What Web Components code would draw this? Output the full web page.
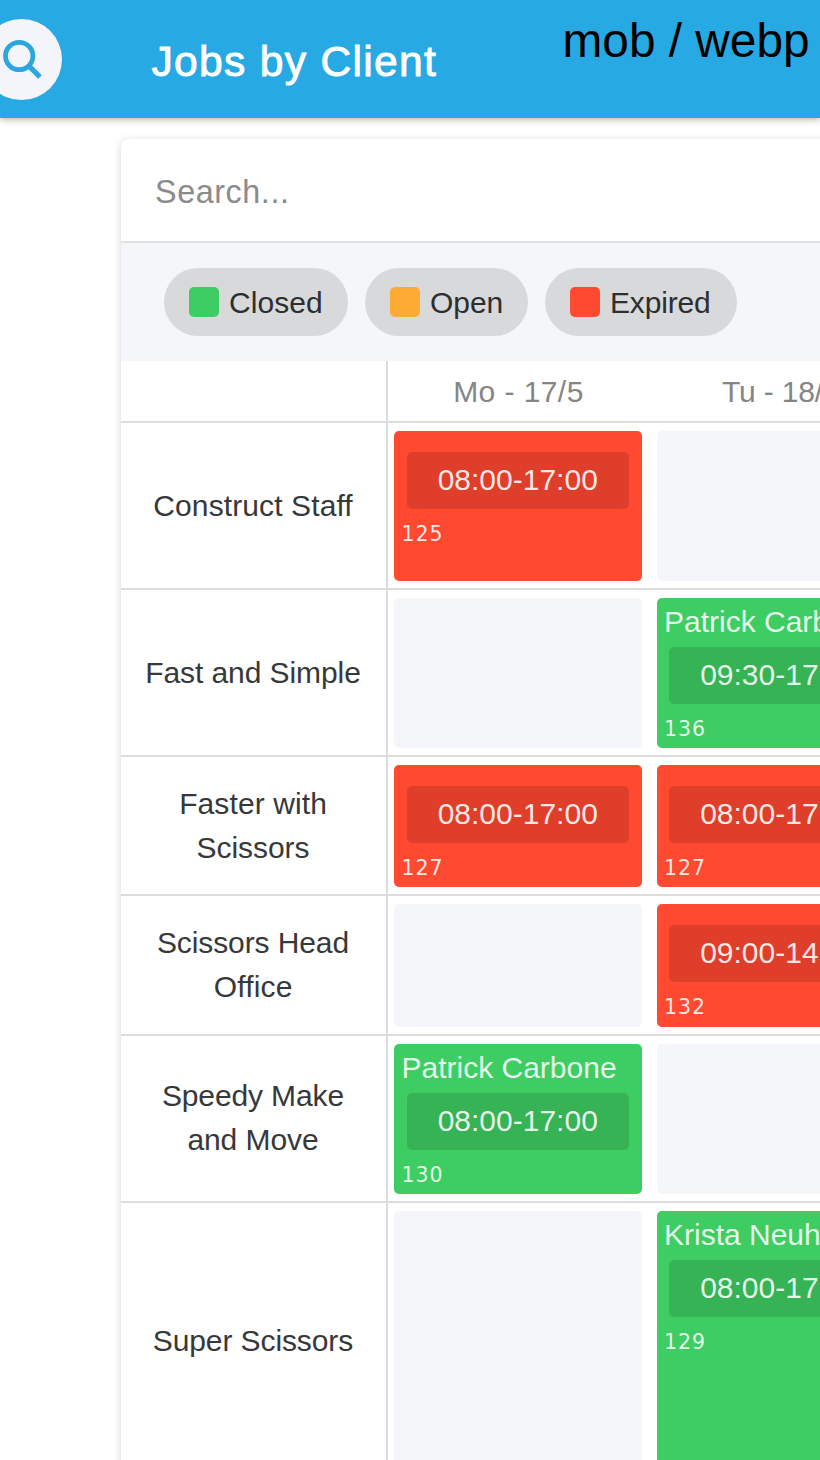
<!DOCTYPE html>
<html lang="en">
<head>
<meta charset="utf-8">
<title>Jobs by Client</title>
<style>
html,body{margin:0;height:1460px;overflow:hidden;background:#fff;font-family:"Liberation Sans",Arial,sans-serif}
</style>
</head>
<body>
<jobs-page></jobs-page>
<script>
const define = (name, html, setup) => {
  const t = document.createElement('template');
  t.innerHTML = html;
  customElements.define(name, class extends HTMLElement {
    constructor() {
      super();
      this.attachShadow({mode: 'open'}).append(t.content.cloneNode(true));
    }
    connectedCallback() { if (setup) setup(this, this.shadowRoot); }
  });
};

/* One line of text, tracked so that its ink spans the width given in "w". */
define('fit-text', `<style>:host{display:inline-block;white-space:nowrap}</style><slot></slot>`, el => {
  if (el.hasAttribute('ls')) { el.style.letterSpacing = el.getAttribute('ls') + 'px'; return; }
  const w = parseFloat(el.getAttribute('w'));
  if (!w) return;
  const cs = getComputedStyle(el), ctx = document.createElement('canvas').getContext('2d');
  ctx.font = cs.fontSize + ' ' + cs.fontFamily;
  const m = ctx.measureText(el.textContent);
  const ink = m.actualBoundingBoxRight + m.actualBoundingBoxLeft;
  const ls = (w - ink) / (el.textContent.length - 1);
  el.style.letterSpacing = ls + 'px';
  el.style.marginRight = -ls + 'px';
});

define('app-bar', `
<style>
:host{display:flex;align-items:center;height:118px;background:#27a9e3;box-shadow:0 1px 7px rgba(60,50,20,.42);position:relative;z-index:2;box-sizing:border-box}
.search{width:81px;height:81px;border-radius:50%;background:#f3f5fb;margin-left:-19px;flex:none}
.search svg{display:block;width:81px;height:81px}
h1{margin:3px 0 0 89.5px;font-size:42.6px;line-height:50px;font-weight:400;color:#fff;-webkit-text-stroke:.9px #fff}
.tag{position:absolute;left:562.5px;top:13px;font-size:47.8px;line-height:55px;color:#000;white-space:nowrap}
</style>
<div class="search"><svg viewBox="0 0 81 81" fill="none" stroke="#2ba6de"><circle cx="38.2" cy="37" r="13.7" stroke-width="4.8"/><path d="M47.8 46.8 59 58" stroke-width="5.2"/></svg></div>
<h1><fit-text w="284.5">Jobs by Client</fit-text></h1>
<div class="tag">mob / webp</div>`);

define('status-chip', `
<style>
:host{display:flex;align-items:center;box-sizing:border-box;height:68px;padding-left:25px;border-radius:34px;background:#d7d9da;color:#2d2e30;font-size:30px;line-height:44px}
i{width:30px;height:30px;border-radius:5px;margin-right:10.5px;background:var(--c)}
slot{display:block;padding-top:2px}
</style><i></i><slot></slot>`, el => {
  el.style.setProperty('--c', el.getAttribute('color'));
  el.style.width = el.getAttribute('width') + 'px';
});

define('job-tile', `
<style>
:host{display:flex;flex-direction:column;box-sizing:border-box;width:247.5px;border-radius:5px;background:#f4f6fa;color:rgba(255,255,255,.88);font-size:30px;line-height:44px;overflow:hidden}
:host([status=closed]){background:#3ecd62}
:host([status=expired]){background:#ff4931}
.name{height:26px;padding:2px 0 0 7.5px;white-space:nowrap}
.time{margin:21px 12.5px 0;height:57px;line-height:55px;border-radius:5px;background:rgba(0,0,0,.125);text-align:center;flex:none}
.id{font:20.5px/30px "DejaVu Sans",sans-serif;letter-spacing:.9px;padding:10px 0 0 7.5px}
</style>`, (el, root) => {
  const a = n => el.getAttribute(n);
  if (!a('status')) return;
  const box = document.createElement('div');
  box.innerHTML = (a('name') ? `<div class="name"><fit-text ls="0">${a('name')}</fit-text></div>` : '') +
    `<div class="time"><fit-text w="158.5">${a('time')}</fit-text></div><div class="id">${a('job')}</div>`;
  root.append(...box.children);
});

define('client-row', `
<style>
:host{display:grid;grid-template-columns:265px 1fr;box-sizing:border-box;color:#37383a;font-size:30px;line-height:44px;border-bottom:2px solid #dcdddf}
.client{border-right:2px solid #dcdddf;box-sizing:border-box;width:267px;display:flex;flex-direction:column;align-items:center;justify-content:center;padding:0 1px var(--drop,0px) 0}
.days{display:flex;gap:15px;padding:8px 0 7px 8px}
</style>
<div class="client"><slot name="client"></slot></div>
<div class="days"><slot></slot></div>`, el => { el.style.height = el.getAttribute('height') + 'px'; });

define('day-header', `
<style>
:host{display:grid;grid-template-columns:265px 1fr;box-sizing:border-box;height:62px;border-bottom:2px solid #dcdddf;color:#858585;font-size:30px;line-height:61px}
.corner{border-right:2px solid #dcdddf;box-sizing:border-box;width:267px}
.days{display:flex;padding-left:1px}
.days div{width:262.5px;text-align:center;flex:none}
</style>
<div class="corner"></div>
<div class="days"><div><fit-text w="127.5">Mo - 17/5</fit-text></div><div><fit-text w="117">Tu - 18/5</fit-text></div></div>`);

define('jobs-card', `
<style>
:host{display:block;margin:21px 0 0 121px;width:900px;background:#fff;border-radius:7px 0 0 0;box-shadow:0 2px 8px rgba(0,0,0,.17)}
.search{height:104px;box-sizing:border-box;border-bottom:2px solid #dfe1e3;padding:3px 0 0 34px;font-size:32.3px;line-height:100px;color:#8b8b8b}
.chips{display:flex;gap:17px;height:118px;box-sizing:border-box;padding:25px 0 0 42.5px;background:#f4f6fa}
</style>
<div class="search"><fit-text w="131">Search...</fit-text></div>
<div class="chips">
<status-chip color="#3ecd62" width="184"><fit-text w="91">Closed</fit-text></status-chip>
<status-chip color="#fdab35" width="163"><fit-text w="70.5">Open</fit-text></status-chip>
<status-chip color="#ff4931" width="192"><fit-text w="97">Expired</fit-text></status-chip>
</div>
<day-header></day-header>
<slot></slot>`);

define('jobs-page', `
<style>:host{display:block;width:820px;height:1460px;overflow:hidden}</style>
<app-bar></app-bar>
<jobs-card>
<client-row height="167"><fit-text slot="client" w="199">Construct Staff</fit-text>
<job-tile status="expired" time="08:00-17:00" job="125"></job-tile><job-tile></job-tile></client-row>
<client-row height="167"><fit-text slot="client" w="213">Fast and Simple</fit-text>
<job-tile></job-tile><job-tile status="closed" name="Patrick Carbone" time="09:30-17:00" job="136"></job-tile></client-row>
<client-row height="139"><fit-text slot="client" w="144">Faster with</fit-text><fit-text slot="client" w="111">Scissors</fit-text>
<job-tile status="expired" time="08:00-17:00" job="127"></job-tile><job-tile status="expired" time="08:00-17:00" job="127"></job-tile></client-row>
<client-row height="140"><fit-text slot="client" w="189.5">Scissors Head</fit-text><fit-text slot="client" w="77">Office</fit-text>
<job-tile></job-tile><job-tile status="expired" time="09:00-14:00" job="132"></job-tile></client-row>
<client-row height="167" style="--drop:1px"><fit-text slot="client" w="180.5">Speedy Make</fit-text><fit-text slot="client" w="129.5">and Move</fit-text>
<job-tile status="closed" name="Patrick Carbone" time="08:00-17:00" job="130"></job-tile><job-tile></job-tile></client-row>
<client-row height="278"><fit-text slot="client" w="198.5">Super Scissors</fit-text>
<job-tile></job-tile><job-tile status="closed" name="Krista Neuhaus" time="08:00-17:00" job="129"></job-tile></client-row>
</jobs-card>`);
</script>
</body>
</html>
